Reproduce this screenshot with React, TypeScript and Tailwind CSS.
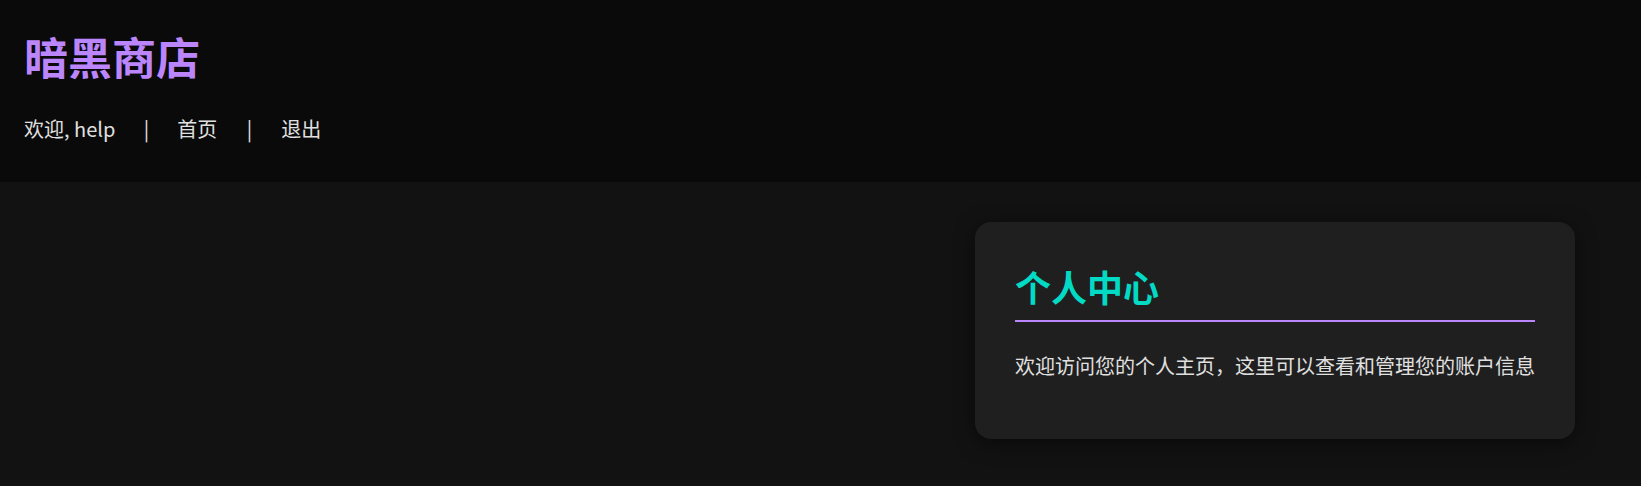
import React from "react";

export default function App() {
  return (
    <div className="min-h-screen bg-[#121212] text-[#e0e0e0] font-['Noto_Sans_CJK_SC','Noto_Sans',sans-serif]">
      <header className="bg-[#0a0a0a] px-[24px] pt-[30px] pb-[38px]">
        <h1 className="text-[44px] leading-[52px] font-bold text-[#bb86fc]">暗黑商店</h1>
        <nav className="mt-[32px] flex items-center text-[20px] leading-[30px] text-[#e0e0e0]">
          <span>欢迎, help</span>
          <span className="mx-[28px] w-[6px] text-center">|</span>
          <a className="cursor-pointer">首页</a>
          <span className="mx-[29px] w-[6px] text-center">|</span>
          <a className="cursor-pointer">退出</a>
        </nav>
      </header>
      <main className="flex justify-end pr-[66px] pt-[40px]">
        <section className="w-[600px] rounded-2xl bg-[#1f1f1f] px-[40px] pt-[40px] pb-[57px] shadow-[0_4px_20px_rgba(0,0,0,0.5)]">
          <h2 className="border-b-2 border-[#bb86fc] pb-[10px] text-[36px] leading-[48px] font-bold text-[#03dac6]">
            个人中心
          </h2>
          <p className="mt-[28px] whitespace-nowrap text-[20px] leading-[32px] text-[#e0e0e0]">
            欢迎访问您的个人主页，这里可以查看和管理您的账户信息
          </p>
        </section>
      </main>
    </div>
  );
}
